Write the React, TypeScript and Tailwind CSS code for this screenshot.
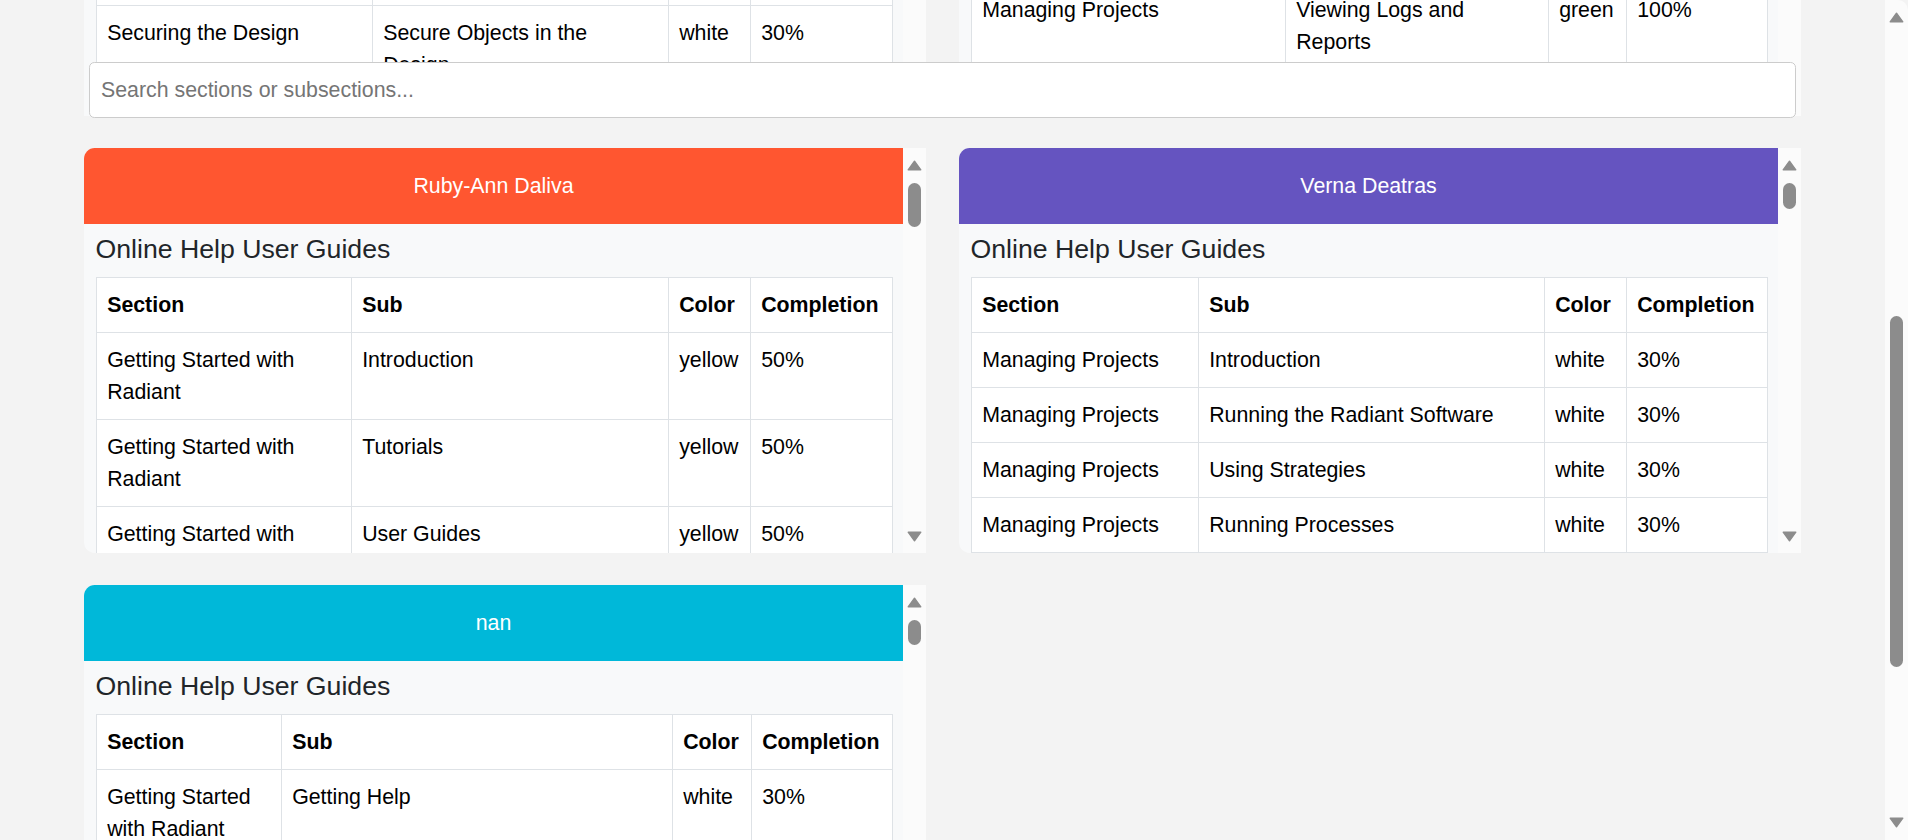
import React from "react";

type Row = { section: string; sub: string; color: string; completion: string };

interface CardProps {
  name: string;
  headerBg: string;
  cols: string[];
  rows: Row[];
  thumb: string;
}

const cell = "border border-[#dee2e6] px-[10.67px] pt-[11px] pb-[11px] align-top text-left leading-[32px]";

function Arrow({ down = false }: { down?: boolean }) {
  return (
    <svg width="15" height="11" viewBox="0 0 15 11" className={down ? "rotate-180" : ""}>
      <path d="M7.5 1.2 L13.8 9.8 L1.2 9.8 Z" fill="#8c8c8c" stroke="#8c8c8c" strokeWidth="1.4" strokeLinejoin="round" />
    </svg>
  );
}

function Scrollbar({ thumb }: { thumb: string }) {
  return (
    <div className="flex w-[23px] shrink-0 flex-col items-center bg-[#fbfbfb] pt-[12px] pb-[11px]">
      <Arrow />
      <div className={`w-[13px] rounded-full bg-[#8c8c8c] ${thumb}`} />
      <div className="flex-1" />
      <Arrow down />
    </div>
  );
}

function DataTable({ cols, rows, head = true, spacer = false, className = "" }: {
  cols: string[];
  rows: Row[];
  head?: boolean;
  spacer?: boolean;
  className?: string;
}) {
  return (
    <table className={`w-full table-fixed border-collapse bg-white text-[21.33px] text-black ${className}`}>
      <colgroup>
        {cols.map((c, i) => (
          <col key={i} className={c} />
        ))}
      </colgroup>
      {head && (
        <thead>
          <tr>
            <th className={`${cell} font-bold`}>Section</th>
            <th className={`${cell} font-bold`}>Sub</th>
            <th className={`${cell} font-bold`}>Color</th>
            <th className={`${cell} font-bold`}>Completion</th>
          </tr>
        </thead>
      )}
      <tbody>
        {spacer && (
          <tr className="h-[20px]">
            <td className="border border-[#dee2e6] p-0" />
            <td className="border border-[#dee2e6] p-0" />
            <td className="border border-[#dee2e6] p-0" />
            <td className="border border-[#dee2e6] p-0" />
          </tr>
        )}
        {rows.map((r, i) => (
          <tr key={i}>
            <td className={cell}>{r.section}</td>
            <td className={cell}>{r.sub}</td>
            <td className={cell}>{r.color}</td>
            <td className={cell}>{r.completion}</td>
          </tr>
        ))}
      </tbody>
    </table>
  );
}

function Card({ name, headerBg, cols, rows, thumb }: CardProps) {
  return (
    <div className="flex h-[405px] min-w-0">
      <div className="flex min-w-0 flex-1 flex-col overflow-hidden rounded-l-[10.67px] bg-[#f8f9fa]">
        <div className={`flex h-[76px] shrink-0 items-center justify-center pt-[1px] text-[21.33px] text-white ${headerBg}`}>
          {name}
        </div>
        <div className="pl-[11.5px] pr-[11.5px]">
          <h3 className="pt-[9px] pb-[11.5px] text-[26.67px] leading-[32px] font-normal text-[#212529]">
            Online Help User Guides
          </h3>
          <DataTable cols={cols} rows={rows} />
        </div>
      </div>
      <Scrollbar thumb={thumb} />
    </div>
  );
}

function PartialCard({ cols, rows, shift, spacer }: { cols: string[]; rows: Row[]; shift: string; spacer?: boolean }) {
  return (
    <div className="flex h-[116px] min-w-0">
      <div className="min-w-0 flex-1 overflow-hidden bg-[#f8f9fa] pl-[11.5px] pr-[11.5px]">
        <DataTable cols={cols} rows={rows} head={false} spacer={spacer} className={shift} />
      </div>
      <div className="w-[23px] shrink-0 bg-[#fbfbfb]" />
    </div>
  );
}

const gs = "Getting Started with Radiant";
const mp = "Managing Projects";

export default function App() {
  return (
    <div className="flex h-screen w-full overflow-hidden bg-[#f3f3f3] font-['Liberation_Sans',Arial,sans-serif]">
      <div className="relative min-w-0 flex-1">
        <div className="grid grid-cols-2 gap-x-[33px] gap-y-[32px] px-[84px]">
          <PartialCard
            cols={["w-[276px]", "w-[296px]", "w-[82px]", "w-[142px]"]}
            rows={[{ section: "Securing the Design", sub: "Secure Objects in the Design", color: "white", completion: "30%" }]}
            shift="-mt-[15px]"
            spacer
          />
          <PartialCard
            cols={["w-[314px]", "w-[263px]", "w-[78px]", "w-[141px]"]}
            rows={[{ section: mp, sub: "Viewing Logs and Reports", color: "green", completion: "100%" }]}
            shift="-mt-[18px]"
          />
          <Card
            name="Ruby-Ann Daliva"
            headerBg="bg-[#ff5630]"
            cols={["w-[255px]", "w-[317px]", "w-[82px]", "w-[142px]"]}
            thumb="mt-[12px] h-[44px]"
            rows={[
              { section: gs, sub: "Introduction", color: "yellow", completion: "50%" },
              { section: gs, sub: "Tutorials", color: "yellow", completion: "50%" },
              { section: gs, sub: "User Guides", color: "yellow", completion: "50%" },
            ]}
          />
          <Card
            name="Verna Deatras"
            headerBg="bg-[#6554c0]"
            cols={["w-[227px]", "w-[346px]", "w-[82px]", "w-[141px]"]}
            thumb="mt-[12px] h-[26px]"
            rows={[
              { section: mp, sub: "Introduction", color: "white", completion: "30%" },
              { section: mp, sub: "Running the Radiant Software", color: "white", completion: "30%" },
              { section: mp, sub: "Using Strategies", color: "white", completion: "30%" },
              { section: mp, sub: "Running Processes", color: "white", completion: "30%" },
            ]}
          />
          <Card
            name="nan"
            headerBg="bg-[#00b8d9]"
            cols={["w-[185px]", "w-[391px]", "w-[79px]", "w-[141px]"]}
            thumb="mt-[12px] h-[25px]"
            rows={[{ section: gs, sub: "Getting Help", color: "white", completion: "30%" }]}
          />
        </div>

        {/* sticky search bar over the scrolled cards */}
        <div className="absolute left-[89px] right-[89px] top-[62px]">
          <input
            type="text"
            placeholder="Search sections or subsections..."
            className="block h-[55.5px] w-full rounded-[5.33px] border border-[#cccccc] bg-white px-[11px] pt-[2px] text-[21.33px] text-black outline-none placeholder:text-[#757575]"
          />
        </div>
      </div>

      {/* page scrollbar */}
      <div className="flex w-[23px] shrink-0 flex-col items-center rounded-tr-[10px] bg-[#fbfbfb] pt-[12px] pb-[12px]">
        <Arrow />
        <div className="mt-[293px] h-[351px] w-[13px] rounded-full bg-[#8c8c8c]" />
        <div className="flex-1" />
        <Arrow down />
      </div>
    </div>
  );
}
